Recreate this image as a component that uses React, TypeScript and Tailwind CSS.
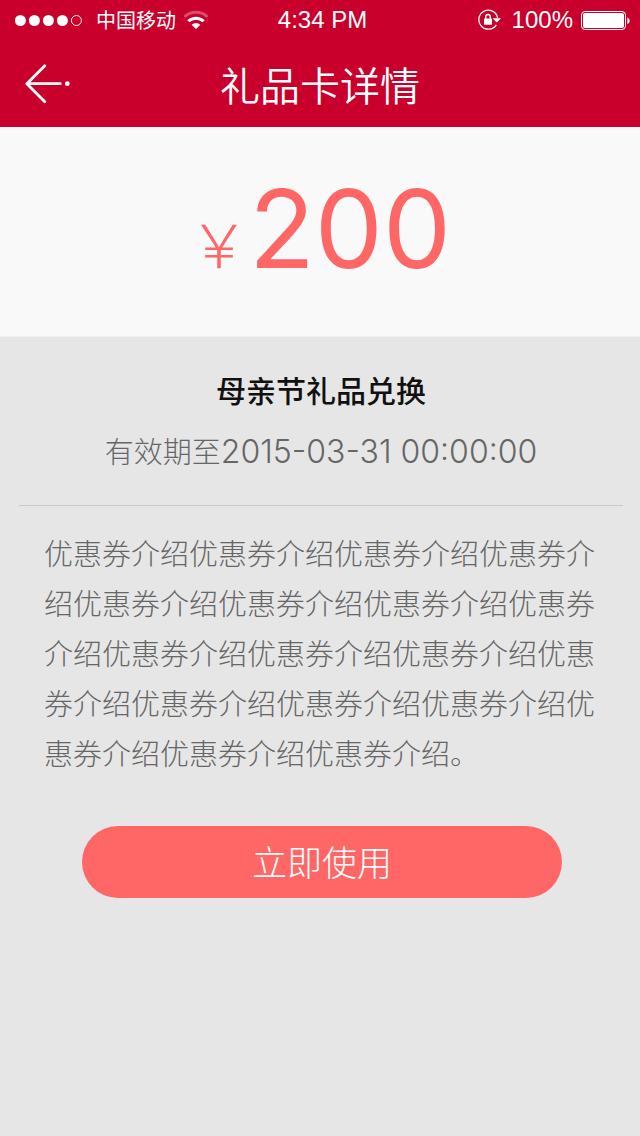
function SignalDots() {
  return (
    <svg width="68" height="12" viewBox="0 0 68 12" fill="#fff" aria-hidden="true">
      <circle cx="6.4" cy="6.5" r="5.5" />
      <circle cx="20.4" cy="6.5" r="5.5" />
      <circle cx="34.4" cy="6.5" r="5.5" />
      <circle cx="48.4" cy="6.5" r="5.5" />
      <circle cx="62.4" cy="6.5" r="5" fill="none" stroke="#fff" />
    </svg>
  );
}

function WifiIcon() {
  return (
    <svg width="26" height="20" viewBox="0 0 26 20" fill="none" stroke="#fff" strokeWidth="3" aria-hidden="true">
      <path d="M1.5 6.8a16.8 16.8 0 0 1 23 0" opacity="0.3" />
      <path d="M5.3 11.3a11 11 0 0 1 15.4 0" />
      <path d="M13 19 8.6 14.8a6.2 6.2 0 0 1 8.8 0z" fill="#fff" stroke="none" />
    </svg>
  );
}

function RotationLockIcon() {
  return (
    <svg width="24" height="22" viewBox="0 0 24 22" fill="none" stroke="#fff" aria-hidden="true">
      <path d="M18.3 15.8A9.5 9.5 0 1 1 19.6 8.8" strokeWidth="1.3" />
      <path d="M14.5 9.3h8.6l-4.3 4.2z" fill="#fff" stroke="none" />
      <rect x="6" y="9.5" width="8" height="6.3" rx="0.6" fill="#fff" stroke="none" />
      <path d="M7.7 10V7.8a2.3 2.3 0 0 1 4.6 0V10" strokeWidth="1.4" />
    </svg>
  );
}

function BatteryIcon() {
  return (
    <svg width="50" height="20" viewBox="0 0 50 20" fill="#fff" aria-hidden="true">
      <rect x="0.5" y="1.5" width="44" height="18" rx="3.5" fill="none" stroke="#fff" />
      <rect x="2" y="3" width="41" height="15" rx="2" />
      <path d="M46.3 7.5a3.4 3.4 0 0 1 0 6.5z" />
    </svg>
  );
}

function BackIcon() {
  return (
    <svg
      width="46"
      height="40"
      viewBox="0 0 46 40"
      fill="none"
      stroke="#fff"
      strokeWidth="2.8"
      strokeLinecap="round"
      strokeLinejoin="round"
      aria-hidden="true"
    >
      <path d="M20.8 1.7 2.8 19.7l18 18M3 19.7h33.2" />
      <circle cx="43.3" cy="19.7" r="2.4" fill="#fff" stroke="none" />
    </svg>
  );
}

const description = "优惠券介绍".repeat(18) + "。";

export default function App() {
  return (
    <div className="min-h-screen bg-[#e6e6e6] font-['Noto_Sans_CJK_SC',sans-serif] text-[#666]">
      <header className="bg-[#c8002b] text-white">
        <div className="grid h-10 grid-cols-[1fr_auto_1fr] items-center pr-[9px] pl-3.5">
          <div className="flex items-center">
            <SignalDots />
            <span className="mr-[7px] ml-3.5 text-xl leading-none">中国移动</span>
            <WifiIcon />
          </div>
          <span className="font-['Liberation_Sans',sans-serif] text-2xl leading-none">4:34 PM</span>
          <div className="flex items-center justify-end">
            <RotationLockIcon />
            <span className="mr-2 ml-2.5 font-['Liberation_Sans',sans-serif] text-2xl leading-none">100%</span>
            <BatteryIcon />
          </div>
        </div>
        <div className="grid h-[87px] grid-cols-[1fr_auto_1fr] items-center px-6">
          <button type="button" aria-label="返回" className="justify-self-start">
            <BackIcon />
          </button>
          <h1 className="text-[40px] leading-none font-[350]">礼品卡详情</h1>
        </div>
      </header>

      <main>
        <section className="flex h-[210px] items-baseline justify-center border-b border-[#eee] bg-[#f9f9f9] pt-12 text-[#ff6767]">
          <span className="text-[60px] leading-none font-light">￥</span>
          <span className="font-['Inter',sans-serif] text-[108px] leading-none font-normal">200</span>
        </section>

        <section className="mr-[17px] ml-[19px] border-b border-[#c8c8c8] pt-[27px] pb-[25px] text-center">
          <h2 className="text-[30px] leading-[50px] font-medium text-[#111]">母亲节礼品兑换</h2>
          <p className="mt-2 text-[29px] leading-[56px] font-light">
            有效期至<time className="font-['Inter',sans-serif] text-[32px]">2015-03-31 00:00:00</time>
          </p>
        </section>

        <p className="px-11 pt-[21px] text-[29px] leading-[50px] font-light break-all">{description}</p>

        <div className="pt-[49px] pr-[78px] pl-[82px]">
          <button type="button" className="h-[72px] w-full rounded-full bg-[#ff6767] pb-1 text-[35px] leading-none font-light text-white">
            立即使用
          </button>
        </div>
      </main>
    </div>
  );
}
